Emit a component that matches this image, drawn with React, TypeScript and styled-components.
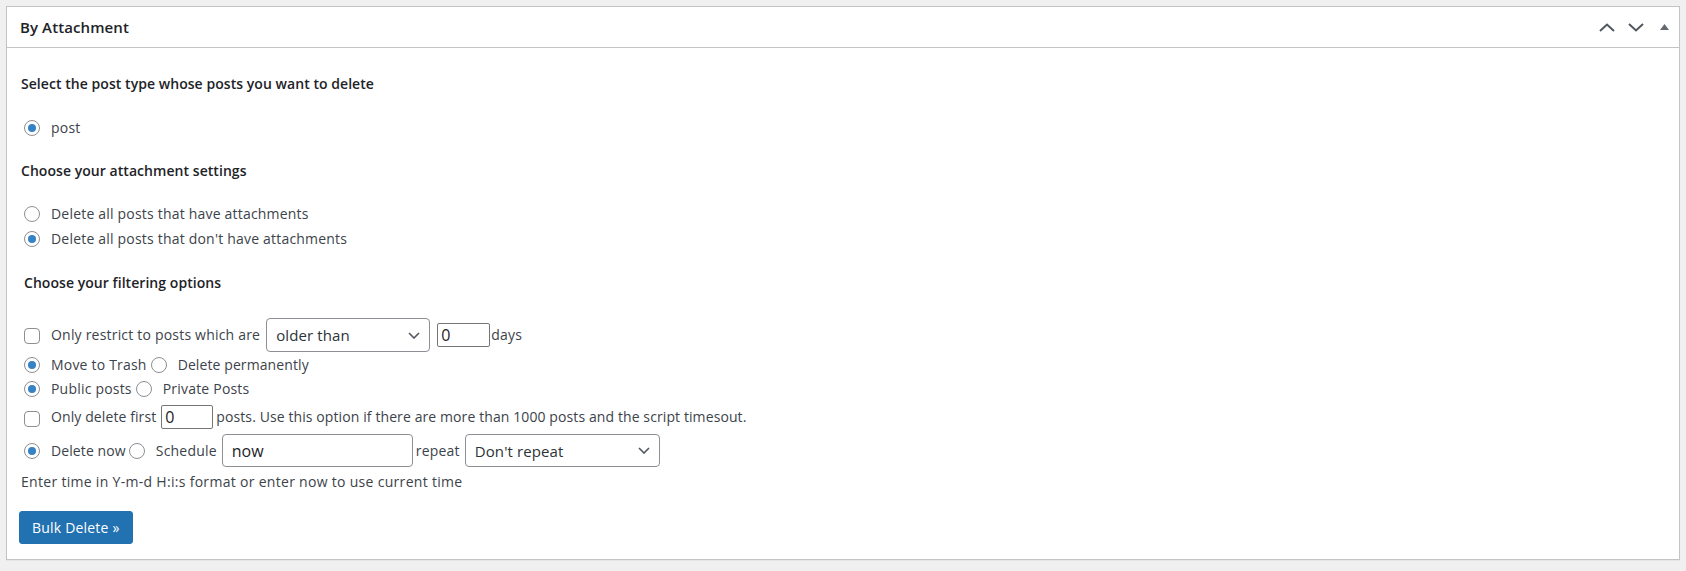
import styled, { createGlobalStyle } from "styled-components";

const GlobalStyle = createGlobalStyle`
    html, body {
        margin: 0;
        padding: 0;
        background: #f0f0f1;
    }
    body {
        font-family: "Open Sans", "Noto Sans", sans-serif;
        font-size: 14px;
        letter-spacing: 0.2px;
        color: #3c434a;
    }
    * {
        box-sizing: border-box;
    }
`;

const Page = styled.div`
    padding: 6px 6px 11px;
`;

const Postbox = styled.div`
    background: #fff;
    border: 1px solid #c3c4c7;
    box-shadow: 0 1px 1px rgba(0, 0, 0, 0.04);
`;

const PostboxHeader = styled.div`
    height: 41px;
    display: flex;
    align-items: center;
    justify-content: space-between;
    border-bottom: 1px solid #c3c4c7;
    padding: 0 0 0 13px;
`;

const Title = styled.h2`
    margin: 0;
    font-size: 15px;
    font-weight: 600;
    letter-spacing: 0.1px;
    color: #1d2327;
`;

const Handles = styled.div`
    display: flex;
    align-items: center;
    height: 100%;
`;

const HandleButton = styled.button`
    width: 29px;
    height: 100%;
    padding: 0;
    border: 0;
    background: transparent;
    display: flex;
    align-items: center;
    justify-content: center;
    color: #50575e;
`;

const Inside = styled.div`
    padding: 0 12px 15px;
    display: flex;
    flex-direction: column;
    align-items: flex-start;
`;

const Heading = styled.h4<{ $mt: number; $indent?: number }>`
    margin: ${props => props.$mt}px 0 0 ${props => props.$indent ?? 2}px;
    font-size: 14px;
    font-weight: 600;
    letter-spacing: 0.05px;
    line-height: 18px;
    color: #1d2327;
`;

const Row = styled.div<{ $mt: number; $h: number }>`
    display: flex;
    align-items: center;
    height: ${props => props.$h}px;
    margin-top: ${props => props.$mt}px;
    white-space: nowrap;
`;

const Text = styled.span<{ $ml?: number; $tight?: boolean }>`
    margin-left: ${props => props.$ml ?? 0}px;
    line-height: 18px;
    letter-spacing: ${props => (props.$tight ? 0.1 : 0.2)}px;
`;

const Radio = styled.input.attrs({ type: "radio" })<{ $ml?: number }>`
    appearance: none;
    flex: none;
    width: 16px;
    height: 16px;
    margin: 0 11px 0 ${props => props.$ml ?? 5}px;
    border: 1px solid #8c8f94;
    border-radius: 50%;
    background: #fff;
    display: inline-flex;
    align-items: center;
    justify-content: center;
    &:checked::before {
        content: "";
        width: 8px;
        height: 8px;
        border-radius: 50%;
        background: #3582c4;
    }
`;

const Checkbox = styled.input.attrs({ type: "checkbox" })<{ $dy?: number }>`
    appearance: none;
    flex: none;
    width: 16px;
    height: 16px;
    margin: ${props => props.$dy ?? 0}px 11px 0 5px;
    border: 1px solid #8c8f94;
    border-radius: 4px;
    background: #fff;
`;

const SelectBox = styled.div<{ $ml: number; $w: number; $h: number }>`
    margin-left: ${props => props.$ml}px;
    width: ${props => props.$w}px;
    height: ${props => props.$h}px;
    border: 1px solid #8c8f94;
    border-radius: 4px;
    padding: 0 9px;
    display: flex;
    align-items: center;
    justify-content: space-between;
    font-size: 15px;
    letter-spacing: 0.1px;
    color: #2c3338;
    background: #fff;
`;

const Field = styled.input<{ $ml: number; $w: number; $h: number; $small?: boolean }>`
    margin: 0 0 0 ${props => props.$ml}px;
    width: ${props => props.$w}px;
    height: ${props => props.$h}px;
    border: 1px solid ${props => (props.$small ? "#767676" : "#8c8f94")};
    border-radius: ${props => (props.$small ? 2 : 4)}px;
    padding: 0 ${props => (props.$small ? 3 : 9)}px;
    font-family: "Open Sans", "Noto Sans", sans-serif;
    font-size: 16px;
    color: #1d2327;
    background: #fff;
    outline: none;
`;

const Hint = styled.p`
    margin: 6px 0 0 2px;
    line-height: 18px;
    letter-spacing: 0.3px;
`;

const Button = styled.button`
    margin-top: 20px;
    height: 33px;
    padding: 0 12px;
    border: 1px solid #2271b1;
    border-radius: 3px;
    background: #2271b1;
    color: #fff;
    font-family: "Open Sans", "Noto Sans", sans-serif;
    font-size: 14px;
    letter-spacing: 0.2px;
`;

function Chevron({ up }: { up?: boolean }) {
    return (
        <svg width="16" height="9" viewBox="0 0 16 9" fill="none">
            <polyline
                points={up ? "1,8 8,1.5 15,8" : "1,1 8,7.5 15,1"}
                stroke="currentColor"
                strokeWidth="2"
            />
        </svg>
    );
}

function SelectArrow() {
    return (
        <svg width="12" height="7" viewBox="0 0 12 7" fill="none">
            <polyline points="1,1 6,6 11,1" stroke="#50575e" strokeWidth="1.6" />
        </svg>
    );
}

function App() {
    return (
        <Page>
            <GlobalStyle />
            <Postbox>
                <PostboxHeader>
                    <Title>By Attachment</Title>
                    <Handles>
                        <HandleButton>
                            <Chevron up />
                        </HandleButton>
                        <HandleButton>
                            <Chevron />
                        </HandleButton>
                        <HandleButton>
                            <svg width="9" height="6" viewBox="0 0 9 6">
                                <polygon points="4.5,0 9,6 0,6" fill="#646970" />
                            </svg>
                        </HandleButton>
                    </Handles>
                </PostboxHeader>
                <Inside>
                    <Heading $mt={27}>Select the post type whose posts you want to delete</Heading>
                    <Row $mt={23} $h={24}>
                        <Radio name="type" defaultChecked />
                        <Text>post</Text>
                    </Row>

                    <Heading $mt={22}>Choose your attachment settings</Heading>
                    <Row $mt={22} $h={24}>
                        <Radio name="attachment" />
                        <Text>Delete all posts that have attachments</Text>
                    </Row>
                    <Row $mt={1} $h={24}>
                        <Radio name="attachment" defaultChecked />
                        <Text>Delete all posts that don't have attachments</Text>
                    </Row>

                    <Heading $mt={23} $indent={5}>Choose your filtering options</Heading>
                    <Row $mt={26} $h={34}>
                        <Checkbox $dy={2} />
                        <Text>Only restrict to posts which are</Text>
                        <SelectBox $ml={6} $w={164} $h={34}>
                            <span>older than</span>
                            <SelectArrow />
                        </SelectBox>
                        <Field $small $ml={7} $w={53} $h={24} defaultValue="0" />
                        <Text $ml={1}>days</Text>
                    </Row>
                    <Row $mt={1} $h={24}>
                        <Radio name="trash" defaultChecked />
                        <Text>Move to Trash</Text>
                        <Radio name="trash" $ml={4} />
                        <Text $tight>Delete permanently</Text>
                    </Row>
                    <Row $mt={0} $h={24}>
                        <Radio name="status" defaultChecked />
                        <Text>Public posts</Text>
                        <Radio name="status" $ml={4} />
                        <Text>Private Posts</Text>
                    </Row>
                    <Row $mt={4} $h={24}>
                        <Checkbox $dy={4} />
                        <Text $tight>Only delete first</Text>
                        <Field $small $ml={5} $w={52} $h={24} defaultValue="0" />
                        <Text $ml={3} $tight>
                            posts. Use this option if there are more than 1000 posts and the script timesout.
                        </Text>
                    </Row>
                    <Row $mt={5} $h={33}>
                        <Radio name="when" defaultChecked />
                        <Text $tight>Delete now</Text>
                        <Radio name="when" $ml={3} />
                        <Text>Schedule</Text>
                        <Field $ml={5} $w={191} $h={33} defaultValue="now" />
                        <Text $ml={3}>repeat</Text>
                        <SelectBox $ml={5} $w={195} $h={33}>
                            <span>Don't repeat</span>
                            <SelectArrow />
                        </SelectBox>
                    </Row>
                    <Hint>Enter time in Y-m-d H:i:s format or enter now to use current time</Hint>

                    <Button>Bulk Delete »</Button>
                </Inside>
            </Postbox>
        </Page>
    );
}

export default App;
